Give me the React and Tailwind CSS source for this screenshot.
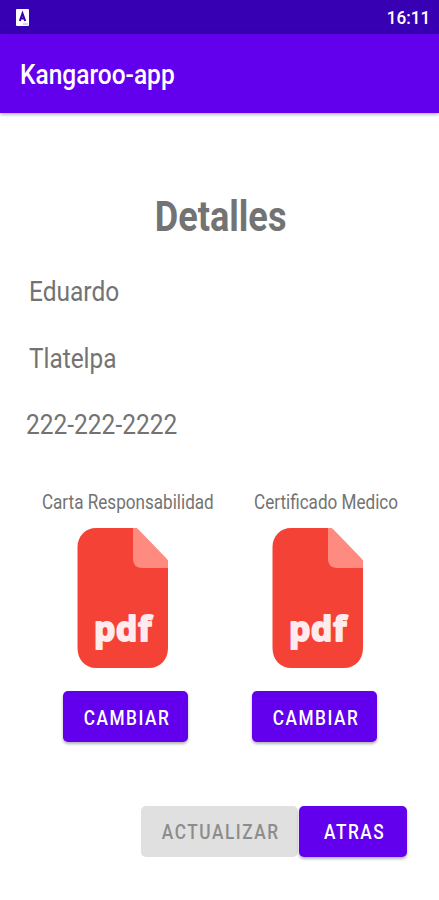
import React from 'react';

const PdfIcon = () => {
    return (
        <svg width="92" height="142" viewBox="0 0 92 142" aria-label="pdf">
            <path d="M19 1H59L91 34V121C91 133 83 141 72 141H19C8.500 141 0.500 133 0.500 121V20C0.500 9 8.500 1 19 1Z" fill="#f44336" />
            <path d="M56 1H58.500Q60 1 61 2L90 32Q91 33 91 36V41H65C59 41 56 37 56 32Z" fill="#ff8a80" />
            <text
                x="17"
                y="113.5"
                className="font-['Open_Sans',sans-serif] text-[34px] font-bold tracking-[0.8px]"
                textLength="58"
                lengthAdjust="spacingAndGlyphs"
                fill="#ffebee"
                stroke="#ffebee"
                strokeWidth="2"
                strokeLinejoin="round"
            >
                pdf
            </text>
        </svg>
    );
};

const Button = ({ children, className }) => {
    return (
        <button
            type="button"
            className={`flex h-[51px] items-center justify-center rounded-[5px] text-[19.6px] font-medium tracking-[1.75px] ${className}`}
        >
            <span className="inline-block scale-x-[0.88] pt-[4px] pl-[3px]">{children}</span>
        </button>
    );
};

const App = () => {
    return (
        <div className="h-[900px] w-full overflow-hidden bg-white font-[Roboto,sans-serif] text-[#737373]">
            <div className="flex h-[34px] items-center justify-between bg-[#3700b3] pr-[9px] pl-4 text-white">
                <svg width="13" height="17" viewBox="0 0 13 17">
                    <rect width="13" height="17" rx="1" fill="#fff" />
                    <path d="M3.800 12L6.500 4.500L9.200 12M4.500 9.500H8.500" fill="none" stroke="#3700b3" strokeWidth="2" />
                    <path d="M7 15H12" stroke="#b9a5e5" strokeWidth="1" />
                </svg>
                <span className="inline-block origin-right scale-x-[0.9] pt-[2px] text-[19px] font-medium">16:11</span>
            </div>
            <header className="flex h-[79px] items-center bg-[#6200ee] pt-[2px] pl-[20px] text-white shadow-[0_1px_4px_rgba(0,0,0,0.4)]">
                <h1 className="origin-left scale-x-[0.875] text-[28px] leading-none font-medium">Kangaroo-app</h1>
            </header>

            <main>
                <h2 className="mt-[79px] pl-[2px] text-center text-[42px] leading-[50px] font-bold">
                    <span className="inline-block scale-x-[0.86]">Detalles</span>
                </h2>
                <div className="mt-[33px] flex flex-col gap-[33.5px] pl-[29px] text-[28px] leading-[33px]">
                    <p className="origin-left scale-x-[0.875]">Eduardo</p>
                    <p className="origin-left scale-x-[0.87]">Tlatelpa</p>
                    <p className="-ml-[3.5px] origin-left scale-x-[0.875]">222-222-2222</p>
                </div>

                <div className="mt-[50px] flex text-[19.6px] leading-[24px]">
                    <p className="w-[212px] origin-left scale-x-[0.873] pl-[48px] whitespace-nowrap">Carta Responsabilidad</p>
                    <p className="ml-[42px] origin-left scale-x-[0.873] whitespace-nowrap">Certificado Medico</p>
                </div>
                <div className="mt-[12px] flex gap-[103px] pl-[77px]">
                    <PdfIcon />
                    <PdfIcon />
                </div>
                <div className="mt-[22px] flex gap-[64px] pl-[63px]">
                    <Button className="w-[125px] bg-[#6200ee] text-white shadow-[0_2px_3px_rgba(0,0,0,0.3)]">CAMBIAR</Button>
                    <Button className="w-[125px] bg-[#6200ee] text-white shadow-[0_2px_3px_rgba(0,0,0,0.3)]">CAMBIAR</Button>
                </div>
                <div className="mt-[63.5px] flex gap-px pl-[141px]">
                    <Button className="w-[157px] bg-[#e0e0e0] text-[#8c8c8c]">ACTUALIZAR</Button>
                    <Button className="w-[108px] bg-[#6200ee] text-white shadow-[0_2px_3px_rgba(0,0,0,0.3)]">ATRAS</Button>
                </div>
            </main>
        </div>
    );
};

export default App;
